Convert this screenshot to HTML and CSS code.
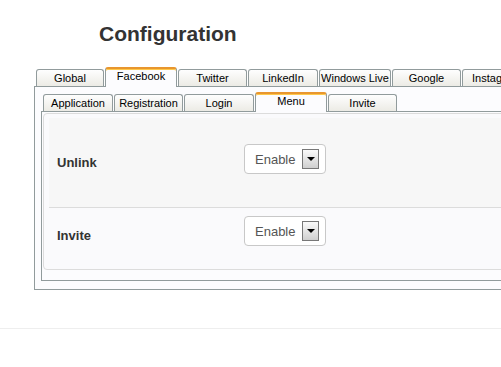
FILE: index.html
```html
<!DOCTYPE html>
<html lang="en">
<head>
    <meta charset="UTF-8">
    <meta name="viewport" content="width=device-width, initial-scale=1.0">
    <title>Configuration</title>
    <link rel="stylesheet" href="styles.css">
</head>
<body>

    <h1 class="title">Configuration</h1>

    <div class="config">
        <!-- Вкладки сетей -->
        <div class="tabs">
            <div class="tab narrow">Global</div>
            <div class="tab wide active">Facebook</div>
            <div class="tab">Twitter</div>
            <div class="tab mid">LinkedIn</div>
            <div class="tab wide">Windows Live</div>
            <div class="tab">Google</div>
            <div class="tab">Instagram</div>
        </div>

        <div class="panel">
            <div class="sub">
                <div class="tabs">
                    <div class="tab mid">Application</div>
                    <div class="tab">Registration</div>
                    <div class="tab mid">Login</div>
                    <div class="tab wide active">Menu</div>
                    <div class="tab">Invite</div>
                </div>

                <div class="panel inner">
                    <div class="options">
                        <div class="row first">
                            <label class="row-label">Unlink</label>
                            <div class="select">
                                <span>Enable</span>
                                <span class="arrow"></span>
                            </div>
                        </div>
                        <div class="row second">
                            <label class="row-label">Invite</label>
                            <div class="select">
                                <span>Enable</span>
                                <span class="arrow"></span>
                            </div>
                        </div>
                    </div>
                </div>
            </div>
        </div>
    </div>

    <div class="footer"></div>

</body>
</html>
```

FILE: styles.css
```css
body {
    margin: 0;
    padding: 0;
    background: #fff;
    font-family: "Liberation Sans", Arial, sans-serif;
    width: 501px;
    overflow: hidden;
}
.title {
    margin: 22px 0 0 99px;
    font-size: 21px;
    line-height: 24px;
    font-weight: bold;
    color: #333;
}
.config {
    margin: 21px 0 0 34px;
    width: 560px;
}
.tabs {
    display: flex;
    align-items: flex-end;
    gap: 1px;
    padding-left: 2px;
}
.tab {
    box-sizing: border-box;
    width: 69px;
    height: 17px;
    border: 1px solid #919b9c;
    border-bottom: none;
    border-radius: 3px 3px 0 0;
    background: linear-gradient(#fefefe, #ecebe5);
    font-size: 11px;
    line-height: 16px;
    text-align: center;
    color: #000;
    white-space: nowrap;
    overflow: hidden;
}
.tab.narrow {
    width: 68px;
}
.tab.mid {
    width: 70px;
}
.tab.wide {
    width: 72px;
}
.tab.active {
    position: relative;
    z-index: 1;
    height: 20px;
    margin-bottom: -1px;
    background: #fcfcfe;
    border-top: 2px solid #e8962e;
    box-shadow: inset 0 1px 0 #ffc84a;
    line-height: 15px;
}
.panel {
    border: 1px solid #919b9c;
    background: #fcfcfe;
    padding: 5px 0 8px 0;
}
.sub {
    margin-left: 6px;
}
.panel.inner {
    padding: 1px 0 10px 1px;
}
.options {
    border: 1px solid #dcdcdc;
    border-radius: 4px;
    background: #fafafc;
    padding: 4px 0 0 5px;
}
.row {
    display: flex;
    align-items: flex-start;
    padding-left: 8px;
}
.row.first {
    background: #f7f7f7;
    border-bottom: 1px solid #dcdcdc;
    padding-top: 26px;
    padding-bottom: 33px;
}
.row.second {
    padding-top: 8px;
    padding-bottom: 23px;
}
.row-label {
    width: 187px;
    font-size: 13px;
    font-weight: bold;
    color: #333;
}
.row.first .row-label {
    margin-top: 8px;
    line-height: 22px;
}
.row.second .row-label {
    margin-top: 10px;
    line-height: 20px;
}
.select {
    box-sizing: border-box;
    width: 82px;
    height: 30px;
    border: 1px solid #c8c8c8;
    border-radius: 4px;
    background: #fff;
    display: flex;
    align-items: center;
    padding-left: 10px;
    font-size: 13px;
    color: #555;
}
.arrow {
    box-sizing: border-box;
    width: 17px;
    height: 20px;
    margin-left: 7px;
    border: 1px solid #777;
    background: linear-gradient(#fafafa, #cfcfcf);
    display: flex;
    align-items: center;
    justify-content: center;
}
.arrow::after {
    content: "";
    border-left: 4px solid transparent;
    border-right: 4px solid transparent;
    border-top: 4px solid #000;
}
.footer {
    margin-top: 38px;
    border-top: 1px solid #eee;
}
```
